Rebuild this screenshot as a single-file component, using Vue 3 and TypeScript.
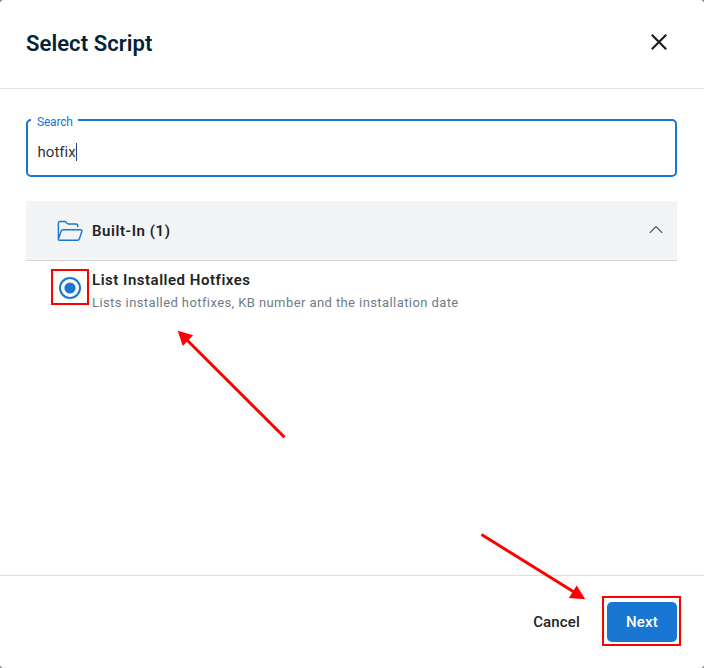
<script setup lang="ts">
import { ref } from 'vue'

interface ScriptItem {
  id: number
  name: string
  description: string
}

const query = ref('hotfix')
const selected = ref(1)
const expanded = ref(true)
const scripts: ScriptItem[] = [
  {
    id: 1,
    name: 'List Installed Hotfixes',
    description: 'Lists installed hotfixes, KB number and the installation date',
  },
]
</script>

<template>
  <div class="dialog">
    <header class="header">
      <h1 class="title">Select Script</h1>
      <svg class="close" width="18" height="18" viewBox="0 0 18 18">
        <path d="M1.8 1.8L16.2 16.2M16.2 1.8L1.8 16.2" />
      </svg>
    </header>

    <main class="body">
      <div class="field">
        <span class="field-label">Search</span>
        <span class="field-value">{{ query }}</span>
        <span class="caret"></span>
      </div>

      <div class="group" @click="expanded = !expanded">
        <svg class="folder" width="26" height="22" viewBox="0 0 26 22">
          <path d="M1.4 19V3.2Q1.4 1.5 3.1 1.5H7.7Q8.7 1.5 9.3 2.4L9.9 3.2Q10.4 4 11.4 4H18.8Q20.7 4 20.7 5.8V7.2" />
          <path d="M6.3 9.8H23.7Q25.3 9.8 24.9 11.2L22.4 18.8Q21.9 20.3 20.4 20.3H2.6Q1 20.3 1.5 18.8L4.1 11.3Q4.6 9.8 6.3 9.8Z" />
        </svg>
        <span class="group-name">Built-In ({{ scripts.length }})</span>
        <svg class="chevron" width="14" height="9" viewBox="0 0 14 9">
          <path d="M.8 7.9L7 1.5L13.2 7.9" />
        </svg>
      </div>

      <template v-if="expanded">
        <div v-for="item in scripts" :key="item.id" class="row" @click="selected = item.id">
          <div class="radio-frame">
            <svg width="22" height="22" viewBox="0 0 22 22">
              <circle class="ring" cx="11" cy="11" r="10" />
              <circle v-if="selected === item.id" class="dot" cx="11" cy="11" r="5.6" />
            </svg>
          </div>
          <div class="row-text">
            <div class="row-name">{{ item.name }}</div>
            <div class="row-desc">{{ item.description }}</div>
          </div>
        </div>
      </template>
    </main>

    <footer class="footer">
      <button class="cancel" type="button">Cancel</button>
      <div class="next-frame">
        <button class="next" type="button">Next</button>
      </div>
    </footer>

    <svg class="arrows" width="704" height="668" viewBox="0 0 704 668">
      <path class="shaft" d="M284.5 437.2L187 340" />
      <path class="head" d="M177.8 330.8L193.2 335.3L182.7 346Z" />
      <path class="shaft" d="M481.5 534.6L574 592" />
      <path class="head" d="M585.3 599.3L576.7 585.4L568.8 598Z" />
    </svg>
  </div>
</template>

<style>
body {
  background: #858585;
}
</style>

<style scoped>
.dialog {
  position: relative;
  box-sizing: border-box;
  display: flex;
  flex-direction: column;
  width: 704px;
  height: 668px;
  background: #fff;
  border-radius: 4px;
  font-family: Roboto, 'Liberation Sans', sans-serif;
  color: #222325;
}

.header {
  box-sizing: border-box;
  display: flex;
  align-items: center;
  justify-content: space-between;
  height: 89px;
  padding: 0 36px 0 26px;
  border-bottom: 1px solid #dee0e2;
}

.title {
  margin: 0;
  font-size: 22px;
  line-height: 26px;
  font-weight: 600;
  letter-spacing: 0.07px;
  color: #032338;
}

.close {
  margin-top: -4px;
  fill: none;
  stroke: #1c1e20;
  stroke-width: 2.2;
}

.body {
  flex: 1;
  padding: 30px 27px 0 26px;
}

.field {
  position: relative;
  box-sizing: border-box;
  display: flex;
  align-items: center;
  height: 58px;
  padding: 7px 9.5px 0;
  border: 2px solid #1976d2;
  border-radius: 5px;
}

.field-label {
  position: absolute;
  top: -6px;
  left: 3px;
  padding: 0 5px 0 6px;
  background: #fff;
  font-size: 12px;
  line-height: 14px;
  letter-spacing: -0.2px;
  color: #1976d2;
}

.field-value {
  font-size: 15px;
  line-height: 20px;
  letter-spacing: 0.03px;
  color: #333;
}

.caret {
  width: 1px;
  height: 18px;
  background: #1b4773;
}

.group {
  box-sizing: border-box;
  display: flex;
  align-items: center;
  height: 60px;
  margin-top: 24px;
  padding: 0 14px 0 30.7px;
  border-bottom: 1px solid #d5d6d7;
  background: #f3f4f6;
}

.folder {
  flex: none;
  margin-right: 9.3px;
  fill: none;
  stroke: #1976d2;
  stroke-width: 1.4;
}

.group-name {
  flex: 1;
  font-size: 15px;
  line-height: 20px;
  font-weight: 600;
  letter-spacing: 0.57px;
}

.chevron {
  margin-top: -2px;
  fill: none;
  stroke: #4a4e52;
  stroke-width: 1.2;
}

.row {
  display: flex;
  padding: 8px 0 0 25px;
}

.radio-frame {
  box-sizing: border-box;
  display: flex;
  align-items: center;
  justify-content: center;
  width: 38px;
  height: 36px;
  padding-top: 2px;
  border: 2px solid #f00;
}

.ring {
  fill: none;
  stroke: #1976d2;
  stroke-width: 2;
}

.dot {
  fill: #1976d2;
}

.row-text {
  margin-left: 3px;
}

.row-name {
  margin-top: 1px;
  font-size: 15px;
  line-height: 20px;
  font-weight: 600;
  letter-spacing: 0.52px;
}

.row-desc {
  margin-top: 4px;
  font-size: 13px;
  line-height: 18px;
  letter-spacing: 0.415px;
  color: #707b88;
}

.footer {
  box-sizing: border-box;
  display: flex;
  align-items: center;
  justify-content: flex-end;
  height: 93px;
  padding: 0 23px 2px 0;
  border-top: 1px solid #dddee5;
}

button {
  padding: 0;
  border: 0;
  font-family: inherit;
  font-size: 15px;
  font-weight: 500;
  letter-spacing: 0.15px;
}

.cancel {
  margin-right: 22px;
  padding-top: 2px;
  background: none;
  color: #222325;
}

.next-frame {
  box-sizing: border-box;
  display: flex;
  width: 79px;
  height: 50px;
  padding: 4px 2px 2px 3px;
  border: 2px solid #f00;
}

.next {
  width: 70px;
  height: 40px;
  border-radius: 5px;
  background: #1976d2;
  color: #fff;
}

.arrows {
  position: absolute;
  inset: 0;
  pointer-events: none;
}

.shaft {
  fill: none;
  stroke: #f00;
  stroke-width: 3;
}

.head {
  fill: #f00;
}
</style>
